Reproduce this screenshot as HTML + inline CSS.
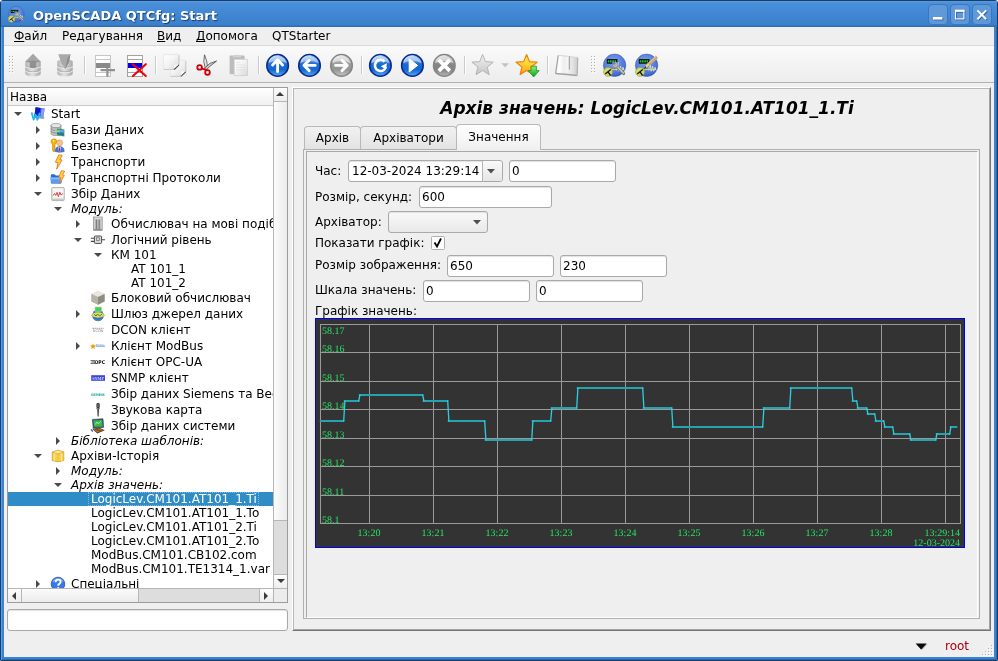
<!DOCTYPE html>
<html lang="uk"><head><meta charset="utf-8"><title>OpenSCADA QTCfg: Start</title>
<style>
*{box-sizing:border-box;margin:0;padding:0}
html,body{width:998px;height:661px;overflow:hidden;background:#fff}
body{position:relative;will-change:transform;font-family:"DejaVu Sans","Liberation Sans",sans-serif;font-size:12px;color:#000;line-height:14px}
.a{position:absolute;white-space:nowrap}
#frame{left:0;top:0;width:998px;height:661px;border-radius:3px 3px 1px 1px;background:#3b82d0;border:1px solid #1b3d69;box-shadow:inset 1px 1px 0 #5c9de4,inset -1px -1px 0 #2c66ad}
#tbar{left:1px;top:1px;width:996px;height:26px;background:linear-gradient(#5b9ce0 0,#4a8fd9 2px,#4085d1 60%,#3c80cb 24px,#2f6db8 25px,#2f6db8 100%)}
#ttl{left:33px;top:8px;font-weight:bold;font-size:13px;line-height:16px;color:#fff;text-shadow:1px 1px 1px #1a3f70}
#client{left:4px;top:27px;width:990px;height:630px;background:#efefef}
#menubar{left:4px;top:27px;width:990px;height:19px;background:#efefef;border-bottom:1px solid #d9d9d9}
.mi{top:29px;line-height:14px}
u{text-decoration-skip-ink:none;text-underline-offset:1px}
#toolbar{left:4px;top:46px;width:990px;height:37px;background:linear-gradient(#fafafa,#f3f3f3 50%,#ededed);border-bottom:1px solid #b2b2b2}
.sep{top:56px;width:2px;height:18px;border-left:1px solid #cbcbcb;border-right:1px solid #fff}
.wb{top:4px;width:19.5px;height:20.5px;border:1px solid #3a77c3;border-radius:4px;background:linear-gradient(#6099d9,#5e98d8)}
#tree{left:7px;top:87px;width:281px;height:516px;border:1px solid #9c9c9c;background:#fff;overflow:hidden}
#thead{left:0;top:0;width:266px;height:18px;background:linear-gradient(#fff,#f0f0f0);border-bottom:1px solid #c9c9c9;border-right:1px solid #c9c9c9}
.tr{left:0;height:14px;line-height:14px}
.it{font-style:italic}
.sel{left:0;width:265px;background:#308cc6}
.foc{border:1px dotted rgba(255,255,255,.4)}
#vs{left:265px;top:0;width:15px;height:500px;background:#e4e4e4;border-left:1px solid #bdbdbd}
#hs{left:0;top:500px;width:265px;height:13px;background:#e4e4e4;border-top:1px solid #bdbdbd}
.sb{background:linear-gradient(#fdfdfd,#ededed);border:1px solid #b5b5b5}
.inp{height:22px;border:1px solid #a9a9a9;border-radius:3px;background:#fff;line-height:20px;padding-left:2px;box-shadow:inset 0 1px 1px #e2e2e2}
.lbl{line-height:14px}
#right{left:292px;top:87px;width:699px;height:544px;border:1px solid #fff;border-right-color:#747474;border-bottom-color:#747474}
#right2{left:293px;top:88px;width:697px;height:542px;border:1px solid #b8b8b8;border-right-color:#a4a4a4;border-bottom-color:#a4a4a4}
.tab{border:1px solid #b9b9b9;border-bottom:none;border-radius:4px 4px 0 0;background:linear-gradient(#f1f1f1,#e3e3e3);text-align:center}
svg{position:absolute;overflow:visible}
</style></head><body>

<div id="frame" class="a"></div><div id="tbar" class="a"></div>
<div id="ttl" class="a">OpenSCADA QTCfg: Start</div>
<svg width="0" height="0" style="position:absolute"><defs><radialGradient id="gscada" cx=".45" cy=".35" r=".7"><stop offset="0" stop-color="#7fa2ee"/><stop offset=".7" stop-color="#4f78d8"/><stop offset="1" stop-color="#2f55b8"/></radialGradient></defs></svg>
<svg class="a" style="left:8px;top:6px" width="16.5" height="16.5" viewBox="53 53.7 23.2 23.2"><circle cx="64.6" cy="65.3" r="11.2" fill="url(#gscada)" stroke="#3a5cc0" stroke-width=".6"/><path d="M66.6 70.3L68.1 62.3L69.1 71.3L70.6 66.3L71.6 71.3L73.1 67.3L74.1 70.3" stroke="#e8eefc" stroke-width=".9" fill="none" opacity=".85"/><rect x="56.8" y="59.099999999999994" width="10.6" height="4.6" fill="#0a0a0a"/><path d="M57.8 61.4h1.5M59.89999999999999 61.4h1.6M62.39999999999999 61.4h1.5M64.5 61.4h1.6" stroke="#25c825" stroke-width="2.2"/><rect x="61.699999999999996" y="60.699999999999996" width=".5" height="1.4" fill="#25c825"/><path d="M56.599999999999994 69.6H74.19999999999999" stroke="#e8e830" stroke-width=".9"/><circle cx="57.99999999999999" cy="71.89999999999999" r="4.5" fill="#cfd870" stroke="#98a238" stroke-width=".6"/><path d="M55.199999999999996 73.89999999999999L60.8 69.5M57.8 71.7L60.599999999999994 75.5" stroke="#141414" stroke-width="1.3"/><path d="M66.19999999999999 65.89999999999999L73.6 73.5" stroke="#7e7e7e" stroke-width="3.2" stroke-linecap="round"/><path d="M66.6 66.1L73.39999999999999 73.1" stroke="#c8c8c8" stroke-width="1.4" stroke-linecap="round"/><circle cx="65.39999999999999" cy="64.89999999999999" r="2.9" fill="#b4b4b4" stroke="#7c7c7c" stroke-width=".6"/><path d="M64.8 64.3L62.39999999999999 61.9" stroke="#5a82e0" stroke-width="2.2"/></svg>
<div class="a wb" style="left:928px"></div>
<div class="a wb" style="left:950px"></div>
<div class="a wb" style="left:972px"></div>
<svg class="a" style="left:0;top:0" width="998" height="28" viewBox="0 0 998 28"> <g stroke="#1f4f8f" fill="none" transform="translate(.8 .8)" opacity=".8"><path d="M933 18.3h9.4" stroke-width="2.6"/><path d="M955 10.8h9.4" stroke-width="2.2"/><rect x="955.5" y="10.5" width="8.4" height="8.4" stroke-width="1.1"/><path d="M977.4 10.4l8.8 8.8M986.2 10.4l-8.8 8.8" stroke-width="2"/></g><g stroke="#fff" fill="none"><path d="M933 18.3h9.4" stroke-width="2.6"/><path d="M955 10.8h9.4" stroke-width="2.2"/><rect x="955.5" y="10.5" width="8.4" height="8.4" stroke-width="1.1"/><path d="M977.4 10.4l8.8 8.8M986.2 10.4l-8.8 8.8" stroke-width="2"/></g></svg>
<div id="client" class="a"></div><div id="menubar" class="a"></div>
<div class="a mi" style="left:14px"><u>Ф</u>айл</div>
<div class="a mi" style="left:62px">Редагування</div>
<div class="a mi" style="left:157px"><u>В</u>ид</div>
<div class="a mi" style="left:196px"><u>Д</u>опомога</div>
<div class="a mi" style="left:272px">QTStarter</div>
<div id="toolbar" class="a"></div>
<div class="a sep" style="left:84px"></div>
<div class="a sep" style="left:155px"></div>
<div class="a sep" style="left:258px"></div>
<div class="a sep" style="left:361px"></div>
<div class="a sep" style="left:464px"></div>
<div class="a sep" style="left:547px"></div>
<svg class="a" style="left:0;top:46px" width="998" height="37" viewBox="0 46 998 37"><defs>
<linearGradient id="gcyl" x1="0" x2="1" y1="0" y2="0"><stop offset="0" stop-color="#b4b4b4"/><stop offset=".45" stop-color="#e2e2e2"/><stop offset="1" stop-color="#a8a8a8"/></linearGradient>
<linearGradient id="gblue" x1="0" x2="0" y1="0" y2="1"><stop offset="0" stop-color="#8fbdf0"/><stop offset=".45" stop-color="#1b6bd0"/><stop offset=".7" stop-color="#1468d0"/><stop offset="1" stop-color="#58a8f0"/></linearGradient>
<linearGradient id="gbookl" x1="0" x2="1" y1="0" y2="0"><stop offset="0" stop-color="#f4f4f4"/><stop offset=".3" stop-color="#ffffff"/><stop offset=".7" stop-color="#ededed"/><stop offset="1" stop-color="#f8f8f8"/></linearGradient><linearGradient id="gbookr" x1="0" x2="1" y1="0" y2="0"><stop offset="0" stop-color="#f0f0f0"/><stop offset=".6" stop-color="#e0e0e0"/><stop offset="1" stop-color="#c8c8c8"/></linearGradient><linearGradient id="ggray2" x1="0" x2="0" y1="0" y2="1"><stop offset="0" stop-color="#cfcfcf"/><stop offset=".45" stop-color="#868686"/><stop offset=".7" stop-color="#828282"/><stop offset="1" stop-color="#b8b8b8"/></linearGradient><linearGradient id="ggray" x1="0" x2="0" y1="0" y2="1"><stop offset="0" stop-color="#d9d9d9"/><stop offset=".45" stop-color="#9a9a9a"/><stop offset=".7" stop-color="#959595"/><stop offset="1" stop-color="#c4c4c4"/></linearGradient>
<linearGradient id="gstar" x1="0" x2="0" y1="0" y2="1"><stop offset="0" stop-color="#fff060"/><stop offset=".5" stop-color="#ffd030"/><stop offset="1" stop-color="#ff9a18"/></linearGradient>
<linearGradient id="gstarg" x1="0" x2="0" y1="0" y2="1"><stop offset="0" stop-color="#f4f4f4"/><stop offset="1" stop-color="#c4c4c4"/></linearGradient>
<linearGradient id="ggreen" x1="0" x2="0" y1="0" y2="1"><stop offset="0" stop-color="#8cf08c"/><stop offset="1" stop-color="#0aa00a"/></linearGradient>
<linearGradient id="gpage" x1="0" x2="1" y1="0" y2="1"><stop offset="0" stop-color="#ffffff"/><stop offset=".45" stop-color="#f4f4f4"/><stop offset="1" stop-color="#d8d8d8"/></linearGradient>
<radialGradient id="gscada" cx=".45" cy=".35" r=".7"><stop offset="0" stop-color="#7fa2ee"/><stop offset=".7" stop-color="#4f78d8"/><stop offset="1" stop-color="#2f55b8"/></radialGradient>
<filter id="bl" x="-20%" y="-20%" width="140%" height="140%"><feGaussianBlur stdDeviation=".35"/></filter>
</defs><rect x="9" y="56" width="1" height="1" fill="#b0b0b0"/><rect x="10" y="57" width="1" height="1" fill="#fff"/><rect x="9" y="59" width="1" height="1" fill="#b0b0b0"/><rect x="10" y="60" width="1" height="1" fill="#fff"/><rect x="9" y="62" width="1" height="1" fill="#b0b0b0"/><rect x="10" y="63" width="1" height="1" fill="#fff"/><rect x="9" y="65" width="1" height="1" fill="#b0b0b0"/><rect x="10" y="66" width="1" height="1" fill="#fff"/><rect x="9" y="68" width="1" height="1" fill="#b0b0b0"/><rect x="10" y="69" width="1" height="1" fill="#fff"/><rect x="9" y="71" width="1" height="1" fill="#b0b0b0"/><rect x="10" y="72" width="1" height="1" fill="#fff"/><rect x="12" y="56" width="1" height="1" fill="#b0b0b0"/><rect x="13" y="57" width="1" height="1" fill="#fff"/><rect x="12" y="59" width="1" height="1" fill="#b0b0b0"/><rect x="13" y="60" width="1" height="1" fill="#fff"/><rect x="12" y="62" width="1" height="1" fill="#b0b0b0"/><rect x="13" y="63" width="1" height="1" fill="#fff"/><rect x="12" y="65" width="1" height="1" fill="#b0b0b0"/><rect x="13" y="66" width="1" height="1" fill="#fff"/><rect x="12" y="68" width="1" height="1" fill="#b0b0b0"/><rect x="13" y="69" width="1" height="1" fill="#fff"/><rect x="12" y="71" width="1" height="1" fill="#b0b0b0"/><rect x="13" y="72" width="1" height="1" fill="#fff"/><rect x="591" y="56" width="1" height="1" fill="#b0b0b0"/><rect x="592" y="57" width="1" height="1" fill="#fff"/><rect x="591" y="59" width="1" height="1" fill="#b0b0b0"/><rect x="592" y="60" width="1" height="1" fill="#fff"/><rect x="591" y="62" width="1" height="1" fill="#b0b0b0"/><rect x="592" y="63" width="1" height="1" fill="#fff"/><rect x="591" y="65" width="1" height="1" fill="#b0b0b0"/><rect x="592" y="66" width="1" height="1" fill="#fff"/><rect x="591" y="68" width="1" height="1" fill="#b0b0b0"/><rect x="592" y="69" width="1" height="1" fill="#fff"/><rect x="591" y="71" width="1" height="1" fill="#b0b0b0"/><rect x="592" y="72" width="1" height="1" fill="#fff"/><rect x="594" y="56" width="1" height="1" fill="#b0b0b0"/><rect x="595" y="57" width="1" height="1" fill="#fff"/><rect x="594" y="59" width="1" height="1" fill="#b0b0b0"/><rect x="595" y="60" width="1" height="1" fill="#fff"/><rect x="594" y="62" width="1" height="1" fill="#b0b0b0"/><rect x="595" y="63" width="1" height="1" fill="#fff"/><rect x="594" y="65" width="1" height="1" fill="#b0b0b0"/><rect x="595" y="66" width="1" height="1" fill="#fff"/><rect x="594" y="68" width="1" height="1" fill="#b0b0b0"/><rect x="595" y="69" width="1" height="1" fill="#fff"/><rect x="594" y="71" width="1" height="1" fill="#b0b0b0"/><rect x="595" y="72" width="1" height="1" fill="#fff"/><g filter="url(#bl)"><path d="M25.3 61.5V74.1A7.700000000000001 2.2 0 0 0 40.7 74.1V61.5A7.700000000000001 2.2 0 0 0 25.3 61.5z" fill="url(#gcyl)"/><path d="M25.3 66.0A7.700000000000001 2.2 0 0 0 40.7 66.0" stroke="#f2f2f2" stroke-width="1" fill="none" opacity=".9"/><path d="M25.3 65.0A7.700000000000001 2.2 0 0 0 40.7 65.0" stroke="#a2a2a2" stroke-width=".8" fill="none" opacity=".8"/><path d="M25.3 70.5A7.700000000000001 2.2 0 0 0 40.7 70.5" stroke="#f2f2f2" stroke-width="1" fill="none" opacity=".9"/><path d="M25.3 69.5A7.700000000000001 2.2 0 0 0 40.7 69.5" stroke="#a2a2a2" stroke-width=".8" fill="none" opacity=".8"/><path d="M33 54L40.3 61.5L37.8 62.2L36.3 62.2L36.3 67.5Q33 68.8 29.7 67.5L29.7 62.2L28.2 62.2L25.7 61.5z" fill="#909090"/><path d="M33 54L40.3 61.5L33 60.5L25.7 61.5z" fill="#a6a6a6"/><path d="M57.3 61.5V74.1A7.700000000000003 2.2 0 0 0 72.7 74.1V61.5A7.700000000000003 2.2 0 0 0 57.3 61.5z" fill="url(#gcyl)"/><path d="M57.3 66.0A7.700000000000003 2.2 0 0 0 72.7 66.0" stroke="#f2f2f2" stroke-width="1" fill="none" opacity=".9"/><path d="M57.3 65.0A7.700000000000003 2.2 0 0 0 72.7 65.0" stroke="#a2a2a2" stroke-width=".8" fill="none" opacity=".8"/><path d="M57.3 70.5A7.700000000000003 2.2 0 0 0 72.7 70.5" stroke="#f2f2f2" stroke-width="1" fill="none" opacity=".9"/><path d="M57.3 69.5A7.700000000000003 2.2 0 0 0 72.7 69.5" stroke="#a2a2a2" stroke-width=".8" fill="none" opacity=".8"/><path d="M58.3 54.3H70.5L69 62L65.3 69.3L61.5 63.5z" fill="#a9a9a9"/><path d="M70.5 54.3L69 62L65.3 69.3L67.5 58z" fill="#8c8c8c"/></g><g><rect x="95.5" y="55.5" width="15" height="21" fill="#fff" stroke="#c6c6c6"/><path d="M96 59.5H110M96 72.5H110" stroke="#c6c6c6"/><rect x="96" y="63" width="14" height="5" fill="#8a8a8a"/><path d="M100.5 70.2H115M107.4 64.5V76.8" stroke="#8c8c8c" stroke-width="2.2" opacity=".95"/></g><g><rect x="127.5" y="55.5" width="15" height="21" fill="#fff" stroke="#a2a2a2"/><path d="M128 59.5H142M128 72.5H142" stroke="#a2a2a2"/><rect x="128" y="63" width="14" height="5" fill="#0000e4"/><path d="M132.8 64.2L145.8 76M145.8 64.2L133 76" stroke="#ee0010" stroke-width="2.1" stroke-linecap="round"/></g><g filter="url(#bl)"><path d="M170.6 60.2H185.8V71.6L180.8 76.5H170.6z" fill="url(#gpage)" stroke="#dedede" stroke-width=".6"/><path d="M170.8 76.4H180.8M185.8 71.6V61" stroke="#c6c6c6" stroke-width=".9" fill="none"/><path d="M185.7 71.7L180.9 76.4" stroke="#505050" stroke-width="1.2" fill="none"/><path d="M185.4 71.2H182Q181 71.3 180.9 72.4V75.6z" fill="#fafafa"/><path d="M163.6 54.6H179V64.8L174 69.6H163.6z" fill="url(#gpage)" stroke="#dedede" stroke-width=".6"/><path d="M163.8 69.5H174M179 64.8V55.4" stroke="#c6c6c6" stroke-width=".9" fill="none"/><path d="M178.9 64.9L174.1 69.5" stroke="#444" stroke-width="1.3" fill="none"/><path d="M178.6 64.4H175.2Q174.2 64.5 174.1 65.6V68.8z" fill="#fafafa"/></g><g><path d="M204.5 54.8Q202.6 61.5 205.4 68.6L207.6 67.4Q207.2 60.5 204.5 54.8z" fill="#e4e4e4" stroke="#3c3c3c" stroke-width=".7"/><path d="M216.6 61Q209.5 62 203.8 68.8L205.4 70.6Q210.6 65.4 216.6 61z" fill="#c9c9c9" stroke="#3c3c3c" stroke-width=".7"/><circle cx="199.6" cy="67.4" r="2.3" fill="none" stroke="#cc0008" stroke-width="1.8"/><circle cx="207.5" cy="72.5" r="2.3" fill="none" stroke="#cc0008" stroke-width="1.8"/><path d="M201.6 68.4L205.2 69.8M206.5 70.4L205.3 68.8" stroke="#cc0008" stroke-width="1.7"/></g><g filter="url(#bl)"><rect x="229.6" y="55.6" width="15" height="18.6" rx="1" fill="#bdbdbd"/><path d="M233.5 56.5Q237 53 240.5 56.5z" fill="#c9c9c9"/><rect x="233" y="55.4" width="8" height="1.8" fill="#d4d4d4"/><path d="M234.2 59.3H247.4V75.6H234.2z" fill="url(#gpage)" stroke="#c2c2c2" stroke-width=".6"/><path d="M236 62.5H240M236 65H245M236 67.5H245M236 70H245" stroke="#d6d6d6" stroke-width=".6"/></g><circle cx="277.6" cy="65.4" r="10.8" fill="url(#gblue)" stroke="#0a2a92" stroke-width="1.5"/><path d="M268.20000000000005 63.2A9.7 9.7 0 0 1 287.0 63.2Q277.6 58.900000000000006 268.20000000000005 63.2z" fill="#fff" opacity=".5"/><path d="M269.0 61.400000000000006A9.4 9.4 0 0 1 279.6 56.00000000000001" stroke="#fff" stroke-width="1.2" fill="none" opacity=".55"/><path d="M277.6 60V71.6M272.6 64.9L277.6 59.8L282.6 64.9" stroke="#fff" stroke-width="2.9" fill="none" stroke-linecap="round" stroke-linejoin="round"/><circle cx="309.5" cy="65.4" r="10.8" fill="url(#gblue)" stroke="#0a2a92" stroke-width="1.5"/><path d="M300.1 63.2A9.7 9.7 0 0 1 318.9 63.2Q309.5 58.900000000000006 300.1 63.2z" fill="#fff" opacity=".5"/><path d="M300.9 61.400000000000006A9.4 9.4 0 0 1 311.5 56.00000000000001" stroke="#fff" stroke-width="1.2" fill="none" opacity=".55"/><path d="M304 65.4H315.2M309.2 60.2L304 65.4L309.2 70.6" stroke="#fff" stroke-width="2.9" fill="none" stroke-linecap="round" stroke-linejoin="round"/><circle cx="341.5" cy="65.4" r="10.8" fill="url(#ggray)" stroke="#868686" stroke-width="1.5"/><path d="M332.1 63.2A9.7 9.7 0 0 1 350.9 63.2Q341.5 58.900000000000006 332.1 63.2z" fill="#fff" opacity=".5"/><path d="M332.9 61.400000000000006A9.4 9.4 0 0 1 343.5 56.00000000000001" stroke="#fff" stroke-width="1.2" fill="none" opacity=".55"/><path d="M335.6 65.4H347M342 60.2L347.2 65.4L342 70.6" stroke="#fff" stroke-width="2.9" fill="none" stroke-linecap="round" stroke-linejoin="round"/><circle cx="380.4" cy="65.4" r="10.8" fill="url(#gblue)" stroke="#0a2a92" stroke-width="1.5"/><path d="M371.0 63.2A9.7 9.7 0 0 1 389.79999999999995 63.2Q380.4 58.900000000000006 371.0 63.2z" fill="#fff" opacity=".5"/><path d="M371.79999999999995 61.400000000000006A9.4 9.4 0 0 1 382.4 56.00000000000001" stroke="#fff" stroke-width="1.2" fill="none" opacity=".55"/><path d="M384.6 61.6A5.6 5.6 0 1 0 385.9 67" stroke="#fff" stroke-width="2.6" fill="none"/><path d="M386.9 63.2L386 69.8L380.8 66.2z" fill="#fff"/><circle cx="412.4" cy="65.4" r="10.8" fill="url(#gblue)" stroke="#0a2a92" stroke-width="1.5"/><path d="M403.0 63.2A9.7 9.7 0 0 1 421.79999999999995 63.2Q412.4 58.900000000000006 403.0 63.2z" fill="#fff" opacity=".5"/><path d="M403.79999999999995 61.400000000000006A9.4 9.4 0 0 1 414.4 56.00000000000001" stroke="#fff" stroke-width="1.2" fill="none" opacity=".55"/><path d="M409.2 58.8L417.6 65.4L409.2 72z" fill="#fff" stroke="#fff" stroke-width="1" stroke-linejoin="round"/><circle cx="444.3" cy="65.4" r="10.8" fill="url(#ggray2)" stroke="#868686" stroke-width="1.5"/><path d="M434.90000000000003 63.2A9.7 9.7 0 0 1 453.7 63.2Q444.3 58.900000000000006 434.90000000000003 63.2z" fill="#fff" opacity=".5"/><path d="M435.7 61.400000000000006A9.4 9.4 0 0 1 446.3 56.00000000000001" stroke="#fff" stroke-width="1.2" fill="none" opacity=".55"/><path d="M438.8 59.9L449.8 70.9M449.8 59.9L438.8 70.9" stroke="#fff" stroke-width="3.8" stroke-linecap="butt"/><path d="M482.60 54.40L485.48 61.64L493.25 62.14L487.26 67.11L489.18 74.66L482.60 70.50L476.02 74.66L477.94 67.11L471.95 62.14L479.72 61.64z" fill="url(#gstarg)" stroke="#b4b4b4" stroke-width="1" stroke-linejoin="round"/><path d="M501.3 63.2H509L505.15 67.2z" fill="#c2c2c2"/><path d="M526.60 54.60L529.48 61.64L537.06 62.20L531.26 67.11L533.07 74.50L526.60 70.50L520.13 74.50L521.94 67.11L516.14 62.20L523.72 61.64z" fill="url(#gstar)" stroke="#f08208" stroke-width="1.2" stroke-linejoin="round"/><path d="M531 66.2H536.4V70.6H539.2L533.7 77L528.2 70.6H531z" fill="url(#ggreen)" stroke="#0c8c10" stroke-width=".7" stroke-linejoin="round"/><g filter="url(#bl)"><path d="M558.3 55.3L568 56.3L567.4 74.4L555.6 73.5z" fill="url(#gbookl)"/><path d="M568 56.3L577.8 57.5L577.2 75.4L567.4 74.4z" fill="url(#gbookr)"/><path d="M558.3 55.3L555.6 73.5" stroke="#a6a6a6" stroke-width="1.3"/><path d="M555.6 73.6L567.4 74.5L577.2 75.5" stroke="#a2a2a2" stroke-width="1.5" fill="none"/><path d="M577.8 57.5L577.2 75.4" stroke="#b4b4b4" stroke-width="1.2"/><path d="M558.3 55.3L568 56.3L577.8 57.5" stroke="#cfcfcf" stroke-width=".8" fill="none"/><path d="M569.4 56.6L569.3 69.6" stroke="#9c9c9c" stroke-width="1"/></g><circle cx="614.6" cy="65.3" r="11.2" fill="url(#gscada)" stroke="#3a5cc0" stroke-width=".6"/><path d="M616.6 70.3L618.1 62.3L619.1 71.3L620.6 66.3L621.6 71.3L623.1 67.3L624.1 70.3" stroke="#e8eefc" stroke-width=".9" fill="none" opacity=".85"/><rect x="606.8000000000001" y="59.099999999999994" width="10.6" height="4.6" fill="#0a0a0a"/><path d="M607.8000000000001 61.4h1.5M609.9 61.4h1.6M612.4 61.4h1.5M614.5 61.4h1.6" stroke="#25c825" stroke-width="2.2"/><rect x="611.7" y="60.699999999999996" width=".5" height="1.4" fill="#25c825"/><path d="M606.6 69.6H624.2" stroke="#e8e830" stroke-width=".9"/><circle cx="608.0" cy="71.89999999999999" r="4.5" fill="#cfd870" stroke="#98a238" stroke-width=".6"/><path d="M605.2 73.89999999999999L610.8000000000001 69.5M607.8000000000001 71.7L610.6 75.5" stroke="#141414" stroke-width="1.3"/><path d="M616.2 65.89999999999999L623.6 73.5" stroke="#7e7e7e" stroke-width="3.2" stroke-linecap="round"/><path d="M616.6 66.1L623.4 73.1" stroke="#c8c8c8" stroke-width="1.4" stroke-linecap="round"/><circle cx="615.4" cy="64.89999999999999" r="2.9" fill="#b4b4b4" stroke="#7c7c7c" stroke-width=".6"/><path d="M614.8000000000001 64.3L612.4 61.9" stroke="#5a82e0" stroke-width="2.2"/><circle cx="646.6" cy="65.3" r="11.2" fill="url(#gscada)" stroke="#3a5cc0" stroke-width=".6"/><path d="M648.6 70.3L650.1 62.3L651.1 71.3L652.6 66.3L653.6 71.3L655.1 67.3L656.1 70.3" stroke="#e8eefc" stroke-width=".9" fill="none" opacity=".85"/><rect x="638.8000000000001" y="59.099999999999994" width="10.6" height="4.6" fill="#0a0a0a"/><path d="M639.8000000000001 61.4h1.5M641.9 61.4h1.6M644.4 61.4h1.5M646.5 61.4h1.6" stroke="#25c825" stroke-width="2.2"/><rect x="643.7" y="60.699999999999996" width=".5" height="1.4" fill="#25c825"/><path d="M638.6 69.6H656.2" stroke="#e8e830" stroke-width=".9"/><circle cx="640.0" cy="71.89999999999999" r="4.5" fill="#cfd870" stroke="#98a238" stroke-width=".6"/><path d="M637.2 73.89999999999999L642.8000000000001 69.5M639.8000000000001 71.7L642.6 75.5" stroke="#141414" stroke-width="1.3"/><path d="M657.0 56.699999999999996L647.8000000000001 65.1" stroke="#d0a878" stroke-width="3.2" stroke-linecap="butt"/><path d="M656.2 56.3L647.4 64.3" stroke="#e8c8a0" stroke-width="1" /><path d="M648.2 62.699999999999996L650.0 65.1L645.2 68.7L645.4 65.7z" fill="#e8dc78" stroke="#8a8238" stroke-width=".4"/><path d="M645.4 65.89999999999999L644.0 68.89999999999999L646.0 68.1z" fill="#222"/></svg>
<div id="tree" class="a">
<div id="thead" class="a"></div><div class="a" style="left:2px;top:2px">Назва</div>
<div class="a" style="left:0;top:18px;width:265px;height:483px;overflow:hidden">
<svg class="a" style="left:6px;top:6px" width="8" height="4"><path d="M0 0h8l-4 4z" fill="#4a4a4a"/></svg>
<svg class="a" style="left:22px;top:0px" width="16" height="16" viewBox="0 0 16 16"><path d="M8.6 10.4L14.4 11.2L14 13L7.8 12.2z" fill="#9c9ca6"/><path d="M5.6 1.2L14.6 2.4L13.4 11L4.4 9.8z" fill="#3a4ce0"/><path d="M5.6 1.2L10.4 1.9L9 10.4L4.4 9.8z" fill="#0c18c4"/><path d="M11.6 2.2L14.6 2.6L13.4 11L10.4 10.6z" fill="#8c9cf4"/><path d="M1.6 6.4L3.6 13.6L5.6 8.6L7.4 13.8L9.8 6.8" stroke="#22b4e6" stroke-width="1.8" fill="none" stroke-linejoin="round"/></svg>
<div class="a tr" style="left:43px;top:1px">Start</div>
<svg class="a" style="left:28px;top:20px" width="4" height="8"><path d="M0 0v8l4-4z" fill="#4a4a4a"/></svg>
<svg class="a" style="left:42px;top:16px" width="16" height="16" viewBox="0 0 16 16"><ellipse cx="6" cy="3.6" rx="5" ry="2.2" fill="#e4e4e4" stroke="#8e8e8e" stroke-width=".7"/><path d="M1 3.6V11.4A5 2.2 0 0 0 11 11.4V3.6A5 2.2 0 0 1 1 3.6z" fill="#c2c2c2" stroke="#8e8e8e" stroke-width=".7"/><path d="M1 6.2A5 2.2 0 0 0 11 6.2M1 8.8A5 2.2 0 0 0 11 8.8" stroke="#7a7a7a" stroke-width=".7" fill="none"/><path d="M7 6.6L14.4 7.6V14.6L7 13.2z" fill="#3a9a4a"/><path d="M7.6 7.4L13.8 8.3V10.4L7.6 9.4z" fill="#5aa8e8"/><path d="M7.6 10.4L13.8 11.4V13.6L7.6 12.4z" fill="#2e68c8"/><path d="M5 8L9.6 8.7V10.4L5 9.6z" fill="#8adf9a"/></svg>
<div class="a tr" style="left:63px;top:17px">Бази Даних</div>
<svg class="a" style="left:28px;top:36px" width="4" height="8"><path d="M0 0v8l4-4z" fill="#4a4a4a"/></svg>
<svg class="a" style="left:42px;top:32px" width="16" height="16" viewBox="0 0 16 16"><path d="M3.4 1A2.6 2.6 0 0 0 2.6 6V12.6L3.8 14L5 12.8V11.6L4.2 11L5 10.2V6A2.6 2.6 0 0 0 3.4 1z" fill="#f4b400" stroke="#c47a00" stroke-width=".6"/><circle cx="3.6" cy="2.9" r=".8" fill="#fff3c0"/><circle cx="9.6" cy="4.8" r="3" fill="#f6c48a" stroke="#d08840" stroke-width=".5"/><path d="M5.2 13.6Q5 8.6 9.6 8.4Q14.4 8.6 14.2 13.6Q9.6 15 5.2 13.6z" fill="#3a78e0" stroke="#1c4cb0" stroke-width=".5"/><path d="M8.4 8.4L9.6 9.8L10.8 8.4L10.4 13.6H8.8z" fill="#fff"/><path d="M9.2 9.6H10L10.4 13L9.6 13.8L8.8 13z" fill="#d81818"/></svg>
<div class="a tr" style="left:63px;top:33px">Безпека</div>
<svg class="a" style="left:28px;top:52px" width="4" height="8"><path d="M0 0v8l4-4z" fill="#4a4a4a"/></svg>
<svg class="a" style="left:42px;top:48px" width="16" height="16" viewBox="0 0 16 16"><path d="M8.8 .8L12.2 1.4L9.8 5.6L12 6L6.6 15.2L8 8.6L5.4 8.2z" fill="#ffd040" stroke="#e86a10" stroke-width=".8" stroke-linejoin="round"/></svg>
<div class="a tr" style="left:63px;top:49px">Транспорти</div>
<svg class="a" style="left:28px;top:68px" width="4" height="8"><path d="M0 0v8l4-4z" fill="#4a4a4a"/></svg>
<svg class="a" style="left:42px;top:64px" width="16" height="16" viewBox="0 0 16 16"><path d="M.8 5.2Q.8 4.2 1.8 4.2H4.6L5.8 5.4H10.6Q11.4 5.4 11.4 6.4V12.6Q11.4 13.4 10.6 13.4H1.8Q.8 13.4 .8 12.6z" fill="#2a6ad8"/><path d="M.4 7.4H12.2L11.2 13.6H1.4z" fill="#5a9cf4"/><path d="M.6 7.6H12L11.7 9.2H.9z" fill="#8cbcfa"/><path d="M11.4 .6L14.6 1.2L12.6 5L14.4 5.4L9.6 13.6L10.8 7.8L8.6 7.4z" fill="#ffd040" stroke="#e86a10" stroke-width=".7" stroke-linejoin="round"/></svg>
<div class="a tr" style="left:63px;top:65px">Транспортні Протоколи</div>
<svg class="a" style="left:26px;top:86px" width="8" height="4"><path d="M0 0h8l-4 4z" fill="#4a4a4a"/></svg>
<svg class="a" style="left:42px;top:80px" width="16" height="16" viewBox="0 0 16 16"><rect x="1.8" y="1.6" width="12.4" height="13" rx=".8" fill="#f6f6f6" stroke="#9a9a9a" stroke-width=".8"/><path d="M2.2 13.2H13.8" stroke="#c4c4c4" stroke-width="1.4"/><path d="M3 9.6L4.6 7.4L5.8 9.4L7 6.4L8.4 10.6L9.8 6.2L11 9L12.8 7.6" stroke="#e03030" stroke-width=".9" fill="none"/></svg>
<div class="a tr" style="left:63px;top:81px">Збір Даних</div>
<svg class="a" style="left:46px;top:101px" width="8" height="4"><path d="M0 0h8l-4 4z" fill="#4a4a4a"/></svg>
<div class="a tr it" style="left:63px;top:96px">Модуль:</div>
<svg class="a" style="left:68px;top:114px" width="4" height="8"><path d="M0 0v8l4-4z" fill="#4a4a4a"/></svg>
<svg class="a" style="left:82px;top:110px" width="16" height="16" viewBox="0 0 16 16"><rect x="3.6" y="1" width="8.6" height="13.6" fill="#b8b8b8" stroke="#8c8c8c" stroke-width=".7"/><rect x="4.2" y="1.6" width="7.4" height="1.6" fill="#dcdcdc"/><path d="M6.4 3.6V13.6M9.2 3.6V13.6" stroke="#6e6e6e" stroke-width=".9"/><path d="M4.6 4V13.6M11.2 4V13.6" stroke="#d8d8d8" stroke-width=".8"/><path d="M4.2 13.4H11.6" stroke="#8a8a8a" stroke-width="1"/></svg>
<div class="a tr" style="left:103px;top:111px">Обчислювач на мові подібній на Java</div>
<svg class="a" style="left:66px;top:132px" width="8" height="4"><path d="M0 0h8l-4 4z" fill="#4a4a4a"/></svg>
<svg class="a" style="left:82px;top:126px" width="16" height="16" viewBox="0 0 16 16"><path d="M.8 6.2H4.4M.8 9.4H4.4M11.4 7.8H15" stroke="#4a4a4a" stroke-width="1.1"/><rect x="4.4" y="4" width="7.2" height="7.4" rx="1" fill="#dcdcdc" stroke="#4a4a4a" stroke-width="1"/><rect x="6.6" y="5.8" width="2.8" height="2.6" fill="none" stroke="#6a6a6a" stroke-width=".7"/></svg>
<div class="a tr" style="left:103px;top:127px">Логічний рівень</div>
<svg class="a" style="left:86px;top:147px" width="8" height="4"><path d="M0 0h8l-4 4z" fill="#4a4a4a"/></svg>
<div class="a tr" style="left:103px;top:142px">КМ 101</div>
<div class="a tr" style="left:123px;top:156px">AT 101_1</div>
<div class="a tr" style="left:123px;top:170px">AT 101_2</div>
<svg class="a" style="left:82px;top:184px" width="16" height="16" viewBox="0 0 16 16"><path d="M8 1L14.6 4V11.4L8 14.8L1.4 11.4V4z" fill="#c9c6bd"/><path d="M8 1L14.6 4L8 7L1.4 4z" fill="#e9e7df"/><path d="M8 7L14.6 4V11.4L8 14.8z" fill="#8f8c84"/><path d="M8 7L1.4 4V11.4L8 14.8z" fill="#b5b2a8"/></svg>
<div class="a tr" style="left:103px;top:185px">Блоковий обчислювач</div>
<svg class="a" style="left:68px;top:204px" width="4" height="8"><path d="M0 0v8l4-4z" fill="#4a4a4a"/></svg>
<svg class="a" style="left:82px;top:200px" width="16" height="16" viewBox="0 0 16 16"><circle cx="8" cy="9.4" r="5.8" fill="#3a70d8"/><path d="M3 7.6Q8 5 13 7.6Q13.6 9 13.2 10.6Q8 12.8 2.8 10.6Q2.4 9 3 7.6z" fill="#e8e050"/><path d="M4 8.2L6 10L7.6 8L9.6 10L12 8" stroke="#2a8a3a" stroke-width="1" fill="none"/><rect x="5" y="1" width="6.4" height="4.6" fill="#30e040" stroke="#e8b0c0" stroke-width=".6"/><path d="M1 9.4H3.4M12.6 9.4H15.2" stroke="#e0d040" stroke-width="1.2"/><path d="M4 13.4Q8 16 12 13.4" stroke="#5a9a5a" stroke-width="1" fill="none"/></svg>
<div class="a tr" style="left:103px;top:201px">Шлюз джерел даних</div>
<svg class="a" style="left:82px;top:216px" width="16" height="16" viewBox="0 0 16 16"><path d="M2.4 6.4H13.6" stroke="#b4b4b4" stroke-width="1.4" stroke-dasharray="1.6 .5"/><text x="2.8" y="10.4" font-family="'DejaVu Sans',sans-serif" font-size="3.6" fill="#7c7c7c" textLength="10.4" lengthAdjust="spacingAndGlyphs">DCON</text></svg>
<div class="a tr" style="left:103px;top:217px">DCON клієнт</div>
<svg class="a" style="left:68px;top:236px" width="4" height="8"><path d="M0 0v8l4-4z" fill="#4a4a4a"/></svg>
<svg class="a" style="left:82px;top:232px" width="16" height="16" viewBox="0 0 16 16"><path d="M3 5.4L3.9 7.3L5.9 7.5L4.4 8.9L4.9 10.9L3 9.9L1.2 10.9L1.6 8.9L.2 7.5L2.2 7.3z" fill="#f49a10"/><path d="M5.6 8.4H15" stroke="#6aa8e8" stroke-width=".8"/><text x="5.8" y="8.2" font-family="'DejaVu Sans',sans-serif" font-size="2.8" fill="#3a7ad0" textLength="8.6" lengthAdjust="spacingAndGlyphs">Modbus</text></svg>
<div class="a tr" style="left:103px;top:233px">Клієнт ModBus</div>
<svg class="a" style="left:82px;top:248px" width="16" height="16" viewBox="0 0 16 16"><path d="M.6 6.6H5M1.4 8H5M.6 9.4H5" stroke="#222" stroke-width=".7"/><text x="4.4" y="10" font-family="'DejaVu Sans',sans-serif" font-size="5.2" font-weight="bold" fill="#111" textLength="10.6" lengthAdjust="spacingAndGlyphs">OPC</text></svg>
<div class="a tr" style="left:103px;top:249px">Клієнт OPC-UA</div>
<svg class="a" style="left:82px;top:264px" width="16" height="16" viewBox="0 0 16 16"><rect x="1.2" y="5.2" width="13.8" height="5.6" fill="#3a48d8"/><text x="2.2" y="9.6" font-family="'Liberation Serif',serif" font-size="4.8" font-weight="bold" fill="#c8d0ff" textLength="11.8" lengthAdjust="spacingAndGlyphs">SNMP</text></svg>
<div class="a tr" style="left:103px;top:265px">SNMP клієнт</div>
<svg class="a" style="left:82px;top:280px" width="16" height="16" viewBox="0 0 16 16"><text x="1" y="9.6" font-family="'DejaVu Sans',sans-serif" font-size="3.4" font-weight="bold" fill="#1aa8a0" textLength="13.8" lengthAdjust="spacingAndGlyphs">SIEMENS</text></svg>
<div class="a tr" style="left:103px;top:281px">Збір даних Siemens та Beckhoff</div>
<svg class="a" style="left:82px;top:296px" width="16" height="16" viewBox="0 0 16 16"><rect x="6.4" y=".8" width="3.4" height="5.6" rx="1.7" fill="#3a3a3a"/><path d="M6.6 2.2H9.6M6.6 3.4H9.6M6.6 4.6H9.6" stroke="#8a8a8a" stroke-width=".5"/><path d="M7.3 6.4H8.9L8.6 14.6H7.6z" fill="#2a2a2a"/><path d="M6.2 6.6H10" stroke="#6a6a6a" stroke-width=".8"/></svg>
<div class="a tr" style="left:103px;top:297px">Звукова карта</div>
<svg class="a" style="left:82px;top:312px" width="16" height="16" viewBox="0 0 16 16"><path d="M2.4 1.4L13 .8L13.6 9.4L3.2 10z" fill="#3a5a78" stroke="#22384e" stroke-width=".6"/><path d="M3.6 2.4L12 2L12.5 8.4L4.2 8.8z" fill="#38b848"/><path d="M5 6.6L7 4L8.4 6L10.8 3.2" stroke="#b8f0b0" stroke-width=".8" fill="none"/><path d="M2 10.8L9.4 9.8L14.8 12.2L7.4 15.4z" fill="#50381e"/><path d="M3.6 11.2L9 10.6L13 12.2L7.6 14.4z" fill="#c87830"/><path d="M5 11.6L11.4 12.6M6.6 11.2L9.6 13.6" stroke="#503820" stroke-width=".7"/><path d="M1 11.4L2.8 13.6" stroke="#3050a0" stroke-width="1.2"/></svg>
<div class="a tr" style="left:103px;top:313px">Збір даних системи</div>
<svg class="a" style="left:48px;top:331px" width="4" height="8"><path d="M0 0v8l4-4z" fill="#4a4a4a"/></svg>
<div class="a tr it" style="left:63px;top:328px">Бібліотека шаблонів:</div>
<svg class="a" style="left:26px;top:348px" width="8" height="4"><path d="M0 0h8l-4 4z" fill="#4a4a4a"/></svg>
<svg class="a" style="left:42px;top:342px" width="16" height="16" viewBox="0 0 16 16"><path d="M2.2 4.2L8 2.2L13.8 4.2V12.6Q8 15 2.2 12.6z" fill="#f8d050" stroke="#c89a20" stroke-width=".7" stroke-linejoin="round"/><path d="M2.2 4.2L8 2.2L13.8 4.2L8 5.6z" fill="#fff0a0" stroke="#c89a20" stroke-width=".5" stroke-linejoin="round"/><path d="M4.4 5.2V13.2M11.6 5.2V13.2" stroke="#fbe68a" stroke-width="1.2"/><path d="M8 5.8V14" stroke="#e8b830" stroke-width=".7"/></svg>
<div class="a tr" style="left:63px;top:343px">Архіви-Історія</div>
<svg class="a" style="left:48px;top:361px" width="4" height="8"><path d="M0 0v8l4-4z" fill="#4a4a4a"/></svg>
<div class="a tr it" style="left:63px;top:358px">Модуль:</div>
<svg class="a" style="left:46px;top:377px" width="8" height="4"><path d="M0 0h8l-4 4z" fill="#4a4a4a"/></svg>
<div class="a tr it" style="left:63px;top:372px">Архів значень:</div>
<div class="a sel" style="top:386px;height:14px"></div><div class="a foc" style="left:80px;top:386px;width:171px;height:14px"></div>
<div class="a tr" style="left:83px;top:386px;color:#fff">LogicLev.CM101.AT101_1.Ti</div>
<div class="a tr" style="left:83px;top:400px">LogicLev.CM101.AT101_1.To</div>
<div class="a tr" style="left:83px;top:414px">LogicLev.CM101.AT101_2.Ti</div>
<div class="a tr" style="left:83px;top:428px">LogicLev.CM101.AT101_2.To</div>
<div class="a tr" style="left:83px;top:442px">ModBus.CM101.CB102.com</div>
<div class="a tr" style="left:83px;top:456px">ModBus.CM101.TE1314_1.var</div>
<svg class="a" style="left:28px;top:474px" width="4" height="8"><path d="M0 0v8l4-4z" fill="#4a4a4a"/></svg>
<svg class="a" style="left:42px;top:470px" width="16" height="16" viewBox="0 0 16 16"><circle cx="8" cy="8" r="6.8" fill="#3a7ae8" stroke="#2050c0" stroke-width=".8"/><path d="M2.6 6A5.8 5.8 0 0 1 13.4 6Q8 3.2 2.6 6z" fill="#fff" opacity=".4"/><path d="M5.6 6.2Q5.6 3.6 8.1 3.6Q10.6 3.6 10.6 5.8Q10.6 7.2 9.2 7.9Q8.2 8.4 8.2 9.8" stroke="#fff" stroke-width="1.9" fill="none"/><circle cx="8.2" cy="12.2" r="1.1" fill="#fff"/></svg>
<div class="a tr" style="left:63px;top:471px">Спеціальні</div>
</div>
<div class="a" style="left:265px;top:0;width:14px;height:501px;background:#dddddd;border-left:1px solid #b6b6b6"></div>
<div class="a" style="left:266px;top:0;width:13px;height:14px;background:linear-gradient(#fdfdfd,#ededed);border-bottom:1px solid #b6b6b6"></div>
<div class="a" style="left:266px;top:14px;width:13px;height:419px;background:linear-gradient(90deg,#fbfbfb,#ebebeb);border-bottom:1px solid #b6b6b6"></div>
<div class="a" style="left:266px;top:486px;width:13px;height:15px;background:linear-gradient(#fdfdfd,#ededed);border-top:1px solid #b6b6b6"></div>
<svg class="a" style="left:268px;top:4px" width="8" height="4"><path d="M0 4h8l-4-4z" fill="#3c3c3c"/></svg>
<svg class="a" style="left:269px;top:491px" width="8" height="4"><path d="M0 0h8l-4 4z" fill="#3c3c3c"/></svg>
<div class="a" style="left:0;top:500px;width:279px;height:14px;background:#dddddd;border-top:1px solid #b6b6b6"></div>
<div class="a" style="left:0;top:501px;width:14px;height:13px;background:linear-gradient(#fdfdfd,#ededed);border-right:1px solid #b6b6b6"></div>
<div class="a" style="left:14px;top:501px;width:117px;height:13px;background:linear-gradient(#fbfbfb,#ebebeb);border-right:1px solid #b6b6b6"></div>
<div class="a" style="left:251px;top:501px;width:15px;height:13px;background:linear-gradient(#fdfdfd,#ededed);border-left:1px solid #b6b6b6;border-right:1px solid #b6b6b6"></div>
<div class="a" style="left:266px;top:501px;width:13px;height:13px;background:#ececec"></div>
<svg class="a" style="left:4px;top:504px" width="4" height="8"><path d="M4 0v8l-4-4z" fill="#3c3c3c"/></svg>
<svg class="a" style="left:256px;top:504px" width="4" height="8"><path d="M0 0v8l4-4z" fill="#3c3c3c"/></svg>
</div>
<div class="a inp" style="left:7px;top:609px;width:281px;height:22px"></div>
<div id="right" class="a"></div><div id="right2" class="a"></div>
<div class="a" style="left:300px;top:97px;width:694px;text-align:center;font-weight:bold;font-style:italic;font-size:17px;line-height:22px">Архів значень: LogicLev.CM101.AT101_1.Ti</div>
<div class="a" style="left:303px;top:149px;width:677px;height:470px;border:1px solid #b0b0b0"></div>
<div class="a" style="left:306px;top:151px;width:672px;height:467px;border:1px solid #a8a8a8;border-right-color:#fff;border-bottom-color:#fff"></div>
<div class="a tab" style="left:304px;top:126px;width:57px;height:23px;line-height:22px">Архів</div>
<div class="a tab" style="left:360px;top:126px;width:97px;height:23px;line-height:22px">Архіватори</div>
<div class="a tab" style="left:456px;top:124px;width:85px;height:26px;line-height:24px;background:linear-gradient(#fdfdfd,#f7f7f7 50%,#efefef)">Значення</div>
<div class="a lbl" style="left:315px;top:164px">Час:</div>
<div class="a inp" style="left:348px;top:160px;width:155px;padding-left:3px">12-03-2024 13:29:14</div>
<div class="a" style="left:482px;top:161px;width:20px;height:20px;border-left:1px solid #b5b5b5;border-radius:0 3px 3px 0;background:linear-gradient(#fafafa,#e6e6e6)"></div>
<svg class="a" style="left:487px;top:169px" width="8" height="4.4"><path d="M0 0h8l-4 4.4z" fill="#4f4f4f"/></svg>
<div class="a inp" style="left:509px;top:160px;width:107px">0</div>
<div class="a lbl" style="left:315px;top:190px">Розмір, секунд:</div>
<div class="a inp" style="left:419px;top:186px;width:133px;height:22px">600</div>
<div class="a lbl" style="left:315px;top:215px">Архіватор:</div>
<div class="a inp" style="left:388px;top:211px;width:100px;height:22px;background:linear-gradient(#fafafa,#e8e8e8)"></div>
<svg class="a" style="left:473px;top:220px" width="8" height="4.4"><path d="M0 0h8l-4 4.4z" fill="#4f4f4f"/></svg>
<div class="a lbl" style="left:315px;top:236px">Показати графік:</div>
<div class="a" style="left:431px;top:236px;width:14px;height:14px;border:1px solid #b0b0b0;border-radius:1.5px;background:#fff"></div>
<svg class="a" style="left:431px;top:236px" width="14" height="14"><path d="M3.5 6.5l2.5 4 4-8" stroke="#000" stroke-width="1.8" fill="none"/></svg>
<div class="a lbl" style="left:315px;top:258px">Розмір зображення:</div>
<div class="a inp" style="left:447px;top:255px;width:107px;height:22px">650</div>
<div class="a inp" style="left:560px;top:255px;width:107px;height:22px">230</div>
<div class="a lbl" style="left:315px;top:283px">Шкала значень:</div>
<div class="a inp" style="left:423px;top:280px;width:107px;height:22px">0</div>
<div class="a inp" style="left:536px;top:280px;width:107px;height:22px">0</div>
<div class="a lbl" style="left:315px;top:304px">Графік значень:</div>
<svg class="a" style="left:315px;top:318px" width="650" height="230" viewBox="315 318 650 230" shape-rendering="crispEdges">
<rect x="315" y="318" width="650" height="230" fill="#0000f4"/>
<rect x="316" y="319" width="648" height="228" fill="#333333"/>
<path d="M320.5 324V524M369.5 324V524M433.5 324V524M497.5 324V524M561.5 324V524M625.5 324V524M689.5 324V524M753.5 324V524M817.5 324V524M881.5 324V524M945.5 324V524M960.5 324V524M320 324.5H961M320 352.5H961M320 381.5H961M320 409.5H961M320 438.5H961M320 466.5H961M320 495.5H961M320 523.5H961" stroke="#9a9a9a" stroke-width="1" fill="none"/>
<path d="M320.6 421H343.6M344.6 401H358.6M359.6 395H422.6M423.6 401H447.6M448.6 421H484.6M485.6 440H531.6M532.6 421H550.6M551.6 408H576.6M577.6 388H642.6M643.6 408H671.6M672.6 427H762.6M763.6 408H789.6M790.6 388H851.6M852.6 401H856.6M857.6 408H866.6M867.6 414H874.6M875.6 421H883.6M884.6 427H892.6M893.6 434H909.6M910.6 440H935.6M936.6 434H949.6M950.6 427H956.6" stroke="#27a3b0" stroke-width="2" fill="none" shape-rendering="auto" stroke-linecap="round"/>
<path d="M343.7 421L344.9 401M358.7 401L359.9 395M422.7 395L423.9 401M447.7 401L448.9 421M484.7 421L485.9 440M531.7 440L532.9 421M550.7 421L551.9 408M576.7 408L577.9 388M642.7 388L643.9 408M671.7 408L672.9 427M762.7 427L763.9 408M789.7 408L790.9 388M851.7 388L852.9 401M856.7 401L857.9 408M866.7 408L867.9 414M874.7 414L875.9 421M883.7 421L884.9 427M892.7 427L893.9 434M909.7 434L910.9 440M935.7 440L936.9 434M949.7 434L950.9 427" stroke="#2ccfe2" stroke-width="1.3" fill="none" shape-rendering="auto" stroke-linecap="round"/>
<g font-family="'Liberation Serif',serif" font-size="10" fill="#26e262" text-rendering="geometricPrecision">
<text x="322" y="334">58.17</text>
<text x="322" y="352">58.16</text>
<text x="322" y="381">58.15</text>
<text x="322" y="409">58.14</text>
<text x="322" y="438">58.13</text>
<text x="322" y="466">58.12</text>
<text x="322" y="495">58.11</text>
<text x="322" y="523">58.1</text>
<text x="369" y="536" text-anchor="middle">13:20</text>
<text x="433" y="536" text-anchor="middle">13:21</text>
<text x="497" y="536" text-anchor="middle">13:22</text>
<text x="561" y="536" text-anchor="middle">13:23</text>
<text x="625" y="536" text-anchor="middle">13:24</text>
<text x="689" y="536" text-anchor="middle">13:25</text>
<text x="753" y="536" text-anchor="middle">13:26</text>
<text x="817" y="536" text-anchor="middle">13:27</text>
<text x="881" y="536" text-anchor="middle">13:28</text>
<text x="960" y="536" text-anchor="end">13:29:14</text><text x="960" y="546" text-anchor="end">12-03-2024</text>
</g></svg>
<svg class="a" style="left:915px;top:643px" width="13" height="7"><path d="M1.6 1h11l-5.5 6z" fill="#9a9a9a" opacity=".7"/><path d="M.6 .4h11l-5.5 6z" fill="#080808"/></svg>
<div class="a" style="left:945px;top:639px;color:#b00012">root</div>
<svg class="a" style="left:0;top:0" width="998" height="661" viewBox="0 0 998 661" shape-rendering="crispEdges"><rect x="991" y="645" width="1" height="1" fill="#b4b4b4"/><rect x="992" y="646" width="1" height="1" fill="#fdfdfd"/><rect x="991" y="648" width="1" height="1" fill="#b4b4b4"/><rect x="992" y="649" width="1" height="1" fill="#fdfdfd"/><rect x="988" y="648" width="1" height="1" fill="#b4b4b4"/><rect x="989" y="649" width="1" height="1" fill="#fdfdfd"/><rect x="991" y="651" width="1" height="1" fill="#b4b4b4"/><rect x="992" y="652" width="1" height="1" fill="#fdfdfd"/><rect x="988" y="651" width="1" height="1" fill="#b4b4b4"/><rect x="989" y="652" width="1" height="1" fill="#fdfdfd"/><rect x="985" y="651" width="1" height="1" fill="#b4b4b4"/><rect x="986" y="652" width="1" height="1" fill="#fdfdfd"/><rect x="991" y="654" width="1" height="1" fill="#b4b4b4"/><rect x="992" y="655" width="1" height="1" fill="#fdfdfd"/><rect x="988" y="654" width="1" height="1" fill="#b4b4b4"/><rect x="989" y="655" width="1" height="1" fill="#fdfdfd"/><rect x="985" y="654" width="1" height="1" fill="#b4b4b4"/><rect x="986" y="655" width="1" height="1" fill="#fdfdfd"/><rect x="982" y="654" width="1" height="1" fill="#b4b4b4"/><rect x="983" y="655" width="1" height="1" fill="#fdfdfd"/></svg>
</body></html>
